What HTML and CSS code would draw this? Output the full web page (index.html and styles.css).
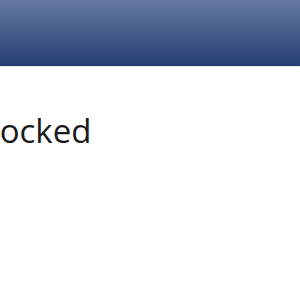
FILE: index.html
```html
<!doctype html>
<html lang="en">
  <head>
    <meta charset="UTF-8" />
    <title>Blocked</title>
    <link rel="stylesheet" href="styles.css">
  </head>
  <body>
    <div class="header"></div>
    <div class="content">
      <h1 class="title">Blocked</h1>
    </div>
  </body>
</html>
```

FILE: styles.css
```css
body {
  margin: 0;
  background-color: #ffffff;
  font-family: "Open Sans", sans-serif;
  overflow: hidden;
}

.header {
  height: 66px;
  background: linear-gradient(to bottom, #6479a1, #233f70);
  border-bottom: 1px solid #e4e8ee;
}

.content {
  padding-top: 44px;
}

.title {
  margin: 0 0 0 -30px;
  font-size: 33px;
  font-weight: normal;
  line-height: 40px;
  color: #1a1a1a;
}
```
